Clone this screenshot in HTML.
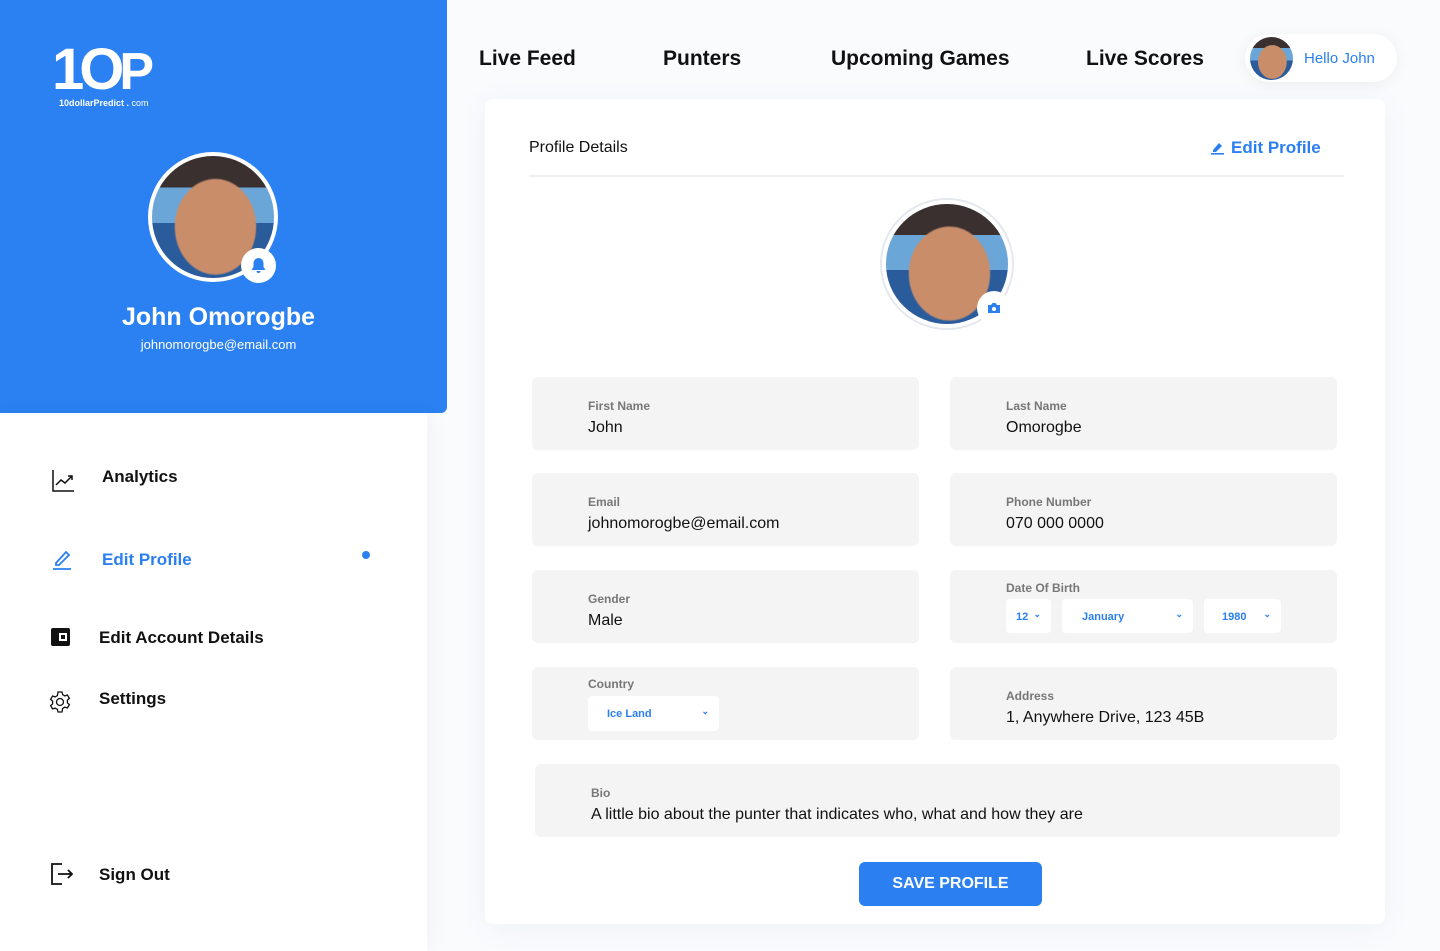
<!DOCTYPE html><html><head><meta charset="utf-8"><style>
*{margin:0;padding:0;box-sizing:border-box}
body{width:1440px;height:951px;background:#fafbfd;font-family:"Liberation Sans",sans-serif;position:relative;overflow:hidden;color:#111}
.a{position:absolute}
.blue{left:0;top:0;width:447px;height:413px;background:#2b80f2;border-radius:0 0 6px 0}
.side{left:0;top:413px;width:427px;height:538px;background:#fff;box-shadow:4px 0 20px rgba(0,0,0,.04)}
.face{border-radius:50%;overflow:hidden;background:radial-gradient(ellipse 34% 40% at 52% 58%,#c98d6a 0 96%,transparent 100%),linear-gradient(180deg,#3a3030 0 26%,#6aa6d8 26% 55%,#2a5b9b 55%);}
.nav{font-weight:bold;font-size:21px;top:47px}
.card{left:485px;top:99px;width:900px;height:825px;background:#fff;border-radius:8px;box-shadow:0 4px 30px rgba(40,80,160,.06)}
.f{background:#f4f4f4;border-radius:6px;width:387px;height:73px}
.f .l{position:absolute;left:56px;font-size:12px;color:#777;font-weight:bold}
.f .v{position:absolute;left:56px;font-size:16px;color:#111}
.sel{position:absolute;background:#fff;border-radius:4px;color:#2b7ff0;font-size:11px;font-weight:bold;height:34px;line-height:36px}
.sel span{position:absolute;right:10px;font-size:9px;line-height:30px}
.mi{font-size:17px;font-weight:bold}
</style></head><body>
<div class="a blue"></div>
<div class="a" style="left:52px;top:38px;color:#fff;font-weight:bold;font-size:58px;letter-spacing:-5px;line-height:64px">1O<span style="font-size:52px">P</span></div>
<div class="a" style="left:59px;top:98px;color:#fff;font-size:9px;font-weight:bold">10dollarPredict . <span style="font-weight:normal">com</span></div>
<div class="a face" style="left:148px;top:152px;width:130px;height:130px;border:4px solid #fff"></div>
<div class="a" style="left:241px;top:248px;width:35px;height:35px;border-radius:50%;background:#fff"></div>
<svg class="a" style="left:250px;top:257px" width="17" height="17" fill="#2b80f2"><path d="M8.5 1a5 5 0 0 0-5 5v4l-2 3h14l-2-3V6a5 5 0 0 0-5-5zM6.5 14a2 2 0 0 0 4 0z"/></svg>
<div class="a" style="left:0;width:437px;top:303px;text-align:center;color:#fff;font-size:25px;font-weight:bold">John Omorogbe</div>
<div class="a" style="left:0;width:437px;top:337px;text-align:center;color:#fff;font-size:13px">johnomorogbe@email.com</div>
<div class="a side"></div>
<svg class="a" style="left:52px;top:469px" width="24" height="24" fill="none" stroke="#111" stroke-width="1.5"><path d="M1 1V22H22M4 16l5-5 4 3 7-7M16 7h4v4"/></svg>
<div class="a mi" style="left:102px;top:467px">Analytics</div>
<svg class="a" style="left:52px;top:548px" width="22" height="24" fill="none" stroke="#2b7ff0" stroke-width="1.8"><path d="M4 15L14 4l3 3L7 17H4z"/><path d="M1 21h18"/></svg>
<div class="a mi" style="left:102px;top:550px;color:#2b7ff0">Edit Profile</div>
<div class="a" style="left:362px;top:551px;width:8px;height:8px;border-radius:50%;background:#2b7ff0"></div>
<div class="a" style="left:51px;top:628px;width:19px;height:18px;background:#111;border-radius:2px"><div class="a" style="left:8px;top:5px;width:8px;height:8px;border:2px solid #fff;background:#111"></div></div>
<div class="a mi" style="left:99px;top:628px">Edit Account Details</div>
<svg class="a" style="left:48px;top:690px" width="24" height="24" fill="none" stroke="#111" stroke-width="1.3"><circle cx="12" cy="12" r="3.5"/><path d="M10 2h4l.6 2.6 2.3 1.3 2.5-.9 2 3.4-2 1.8v2.6l2 1.8-2 3.4-2.5-.9-2.3 1.3L14 22h-4l-.6-2.6-2.3-1.3-2.5.9-2-3.4 2-1.8v-2.6l-2-1.8 2-3.4 2.5.9 2.3-1.3z"/></svg>
<div class="a mi" style="left:99px;top:689px">Settings</div>
<svg class="a" style="left:50px;top:863px" width="24" height="22" fill="none" stroke="#111" stroke-width="1.8"><path d="M12 1H2v20h10M8 11h14M18 7l4 4-4 4"/></svg>
<div class="a mi" style="left:99px;top:865px">Sign Out</div>
<div class="a nav" style="left:479px">Live Feed</div>
<div class="a nav" style="left:663px">Punters</div>
<div class="a nav" style="left:831px">Upcoming Games</div>
<div class="a nav" style="left:1086px">Live Scores</div>
<div class="a" style="left:1245px;top:34px;width:152px;height:48px;border-radius:24px;background:#fff;box-shadow:0 2px 14px rgba(0,0,0,.06)"></div>
<div class="a face" style="left:1250px;top:37px;width:43px;height:43px"></div>
<div class="a" style="left:1304px;top:50px;color:#2b7ff0;font-size:15px">Hello John</div>
<div class="a card"></div>
<div class="a" style="left:529px;top:139px;font-size:16px">Profile Details</div>
<svg class="a" style="left:1211px;top:141px" width="13" height="14" fill="#2b7ff0"><path d="M2 9L8 2l3 3-6 6H2z"/><rect x="0" y="12" width="13" height="1.6"/></svg>
<div class="a" style="left:1231px;top:138px;font-size:17px;color:#2b7ff0;font-weight:bold">Edit Profile</div>
<div class="a" style="left:529px;top:175px;width:815px;height:2px;background:#eee"></div>
<div class="a face" style="left:882px;top:200px;width:130px;height:128px;border:4px solid #fff;box-shadow:0 0 0 2px #e4e8ee"></div>
<div class="a" style="left:977px;top:291px;width:34px;height:34px;border-radius:50%;background:#fff"></div>
<svg class="a" style="left:987px;top:302px" width="14" height="12" fill="#2b7ff0"><path d="M1 3h3l1.5-2h3L10 3h3v8H1z"/><circle cx="7" cy="7" r="2" fill="#fff"/></svg>
<div class="a f" style="left:532px;top:377px"><div class="l" style="top:22px">First Name</div><div class="v" style="top:42px">John</div></div>
<div class="a f" style="left:950px;top:377px"><div class="l" style="top:22px">Last Name</div><div class="v" style="top:42px">Omorogbe</div></div>
<div class="a f" style="left:532px;top:473px"><div class="l" style="top:22px">Email</div><div class="v" style="top:42px">johnomorogbe@email.com</div></div>
<div class="a f" style="left:950px;top:473px"><div class="l" style="top:22px">Phone Number</div><div class="v" style="top:42px">070 000 0000</div></div>
<div class="a f" style="left:532px;top:570px"><div class="l" style="top:22px">Gender</div><div class="v" style="top:42px">Male</div></div>
<div class="a f" style="left:950px;top:570px"><div class="l" style="top:11px">Date Of Birth</div>
<div class="sel" style="left:56px;top:29px;width:45px;padding-left:10px">12<span>⌄</span></div>
<div class="sel" style="left:112px;top:29px;width:131px;padding-left:20px">January<span>⌄</span></div>
<div class="sel" style="left:254px;top:29px;width:77px;padding-left:18px">1980<span>⌄</span></div></div>
<div class="a f" style="left:532px;top:667px"><div class="l" style="top:10px">Country</div>
<div class="sel" style="left:56px;top:29px;width:131px;padding-left:19px;height:35px">Ice Land<span>⌄</span></div></div>
<div class="a f" style="left:950px;top:667px"><div class="l" style="top:22px">Address</div><div class="v" style="top:42px">1, Anywhere Drive, 123 45B</div></div>
<div class="a f" style="left:535px;top:764px;width:805px"><div class="l" style="top:22px">Bio</div><div class="v" style="top:42px">A little bio about the punter that indicates who, what and how they are</div></div>
<div class="a" style="left:859px;top:862px;width:183px;height:44px;background:#2b7ff0;border-radius:6px;color:#fff;font-weight:bold;font-size:16px;text-align:center;line-height:44px">SAVE PROFILE</div>
</body></html>
